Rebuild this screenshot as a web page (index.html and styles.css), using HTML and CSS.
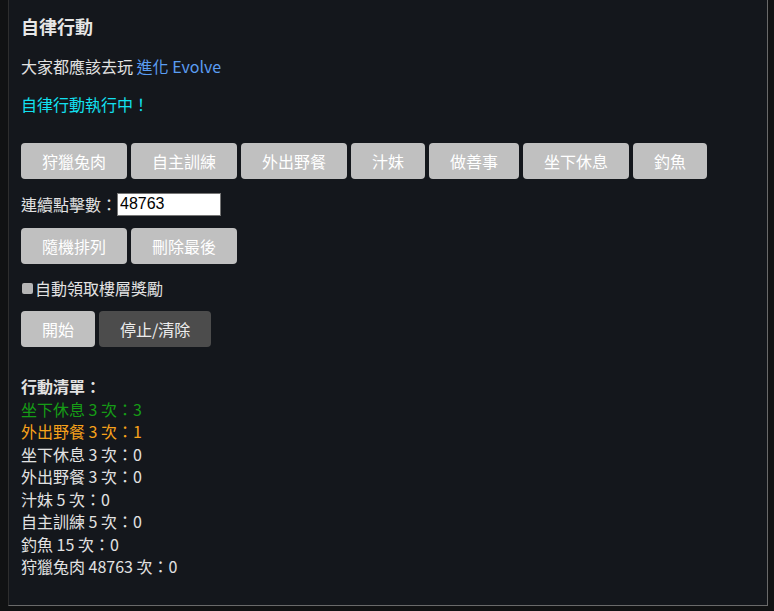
FILE: index.html
```html
<!DOCTYPE html>
<html lang="zh-Hant">
<head>
    <meta charset="UTF-8">
    <meta name="viewport" content="width=device-width, initial-scale=1.0">
    <title>自律行動</title>
    <link rel="stylesheet" href="styles.css">
</head>
<body>

    <!-- 自律行動 panel -->
    <div class="panel">
        <h2 class="title">自律行動</h2>
        <p class="intro">大家都應該去玩 <a href="#">進化 Evolve</a></p>
        <p class="status">自律行動執行中！</p>

        <!-- action buttons -->
        <div class="row actions">
            <button class="btn">狩獵兔肉</button>
            <button class="btn">自主訓練</button>
            <button class="btn">外出野餐</button>
            <button class="btn">汁妹</button>
            <button class="btn">做善事</button>
            <button class="btn">坐下休息</button>
            <button class="btn">釣魚</button>
        </div>

        <div class="row count">
            <label for="clicks">連續點擊數：</label><input id="clicks" class="count-input" type="text" value="48763">
        </div>

        <div class="row tools">
            <button class="btn">隨機排列</button>
            <button class="btn">刪除最後</button>
        </div>

        <div class="row auto">
            <input id="auto-claim" class="check" type="checkbox"><label for="auto-claim">自動領取樓層獎勵</label>
        </div>

        <div class="row controls">
            <button class="btn">開始</button>
            <button class="btn btn-dark">停止/清除</button>
        </div>

        <!-- queue -->
        <div class="queue">
            <div class="queue-title">行動清單：</div>
            <div class="item done">坐下休息 3 次：3</div>
            <div class="item running">外出野餐 3 次：1</div>
            <div class="item">坐下休息 3 次：0</div>
            <div class="item">外出野餐 3 次：0</div>
            <div class="item">汁妹 5 次：0</div>
            <div class="item">自主訓練 5 次：0</div>
            <div class="item">釣魚 15 次：0</div>
            <div class="item">狩獵兔肉 48763 次：0</div>
        </div>
    </div>

</body>
</html>
```

FILE: styles.css
```css
* {
    margin: 0;
    padding: 0;
    box-sizing: border-box;
}

body {
    margin: 0 6px 0 8px;
    background-color: #111213;
    font-family: "Noto Sans CJK TC", "Noto Sans", sans-serif;
    font-size: 16px;
    color: #e2e2e2;
}

.panel {
    background-color: #14171c;
    border-left: 1px solid #2e2e2e;
    border-right: 1px solid #6a6a6a;
    border-bottom: 1px solid #6a6a6a;
    padding: 13px 12px 27px;
}

.title {
    font-size: 18px;
    line-height: 26px;
    font-weight: bold;
    color: #e6e6e6;
}

.intro {
    margin-top: 15px;
    line-height: 24px;
}

.intro a {
    color: #5b9df2;
    text-decoration: none;
}

.status {
    margin-top: 14px;
    line-height: 24px;
    color: #12e0f0;
}

.row {
    display: flex;
    align-items: center;
    gap: 4px;
}

.actions {
    margin-top: 27px;
}

.btn {
    font-family: inherit;
    font-size: 16px;
    line-height: 24px;
    padding: 6px 21px;
    border: none;
    border-radius: 4px;
    background-color: #c0c0c0;
    color: #fff;
    cursor: pointer;
}

.btn-dark {
    background-color: #4c4c4c;
    color: #ececec;
}

.count {
    margin-top: 11px;
    height: 28px;
    gap: 0;
}

.count-input {
    width: 104px;
    height: 23px;
    padding: 1px 2px;
    border: 1px solid #767676;
    background-color: #fff;
    color: #000;
    font-family: "Liberation Sans", Arial, sans-serif;
    font-size: 16px;
}

.tools {
    margin-top: 10px;
}

.auto {
    margin-top: 12px;
    line-height: 24px;
    gap: 0;
}

.check {
    appearance: none;
    width: 11px;
    height: 11px;
    margin: 0 2px 0 1px;
    background-color: #b5b5b5;
    border-radius: 2px;
}

.controls {
    margin-top: 11px;
}

.queue {
    margin-top: 28px;
    line-height: 22.5px;
}

.queue-title {
    font-weight: bold;
}

.done {
    color: #169c16;
}

.running {
    color: #f7a21b;
}
```
